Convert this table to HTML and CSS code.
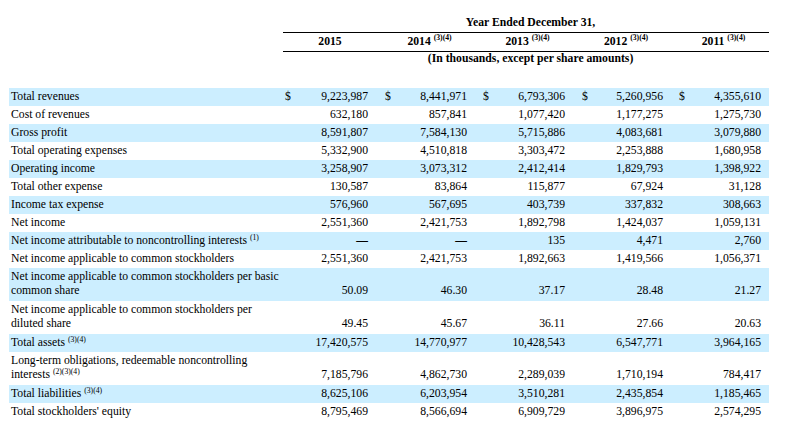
FILE: index.html
```html
<!DOCTYPE html>
<html>
<head>
<meta charset="utf-8">
<link rel="stylesheet" href="styles.css">
</head>
<body>
<div class="page">
<table class="fin">
  <colgroup>
    <col class="c-label">
    <col class="c-dollar"><col class="c-n72"><col class="c-g15">
    <col class="c-dollar"><col class="c-n71"><col class="c-g14">
    <col class="c-dollar"><col class="c-n71"><col class="c-g15">
    <col class="c-dollar"><col class="c-n70"><col class="c-g14">
    <col class="c-dollar"><col class="c-n71"><col class="c-g8">
  </colgroup>
  <thead>
    <tr class="h1">
      <th></th>
      <th colspan="15" class="hc">Year Ended December 31,</th>
    </tr>
    <tr class="h2">
      <th class="nb"></th>
      <th colspan="2" class="yr">2015</th><th></th>
      <th colspan="2" class="yr">2014 <span class="sup">(3)(4)</span></th><th></th>
      <th colspan="2" class="yr">2013 <span class="sup">(3)(4)</span></th><th></th>
      <th colspan="2" class="yr">2012 <span class="sup">(3)(4)</span></th><th></th>
      <th colspan="2" class="yr">2011 <span class="sup">(3)(4)</span></th><th></th>
    </tr>
    <tr class="h3">
      <th></th>
      <th colspan="15" class="hc">(In thousands, except per share amounts)</th>
    </tr>
    <tr class="spacer"><td colspan="16"></td></tr>
  </thead>
  <tbody>
    <tr class="alt">
      <td class="lbl">Total revenues</td>
      <td class="d">$</td><td class="n">9,223,987</td><td></td>
      <td class="d">$</td><td class="n">8,441,971</td><td></td>
      <td class="d">$</td><td class="n">6,793,306</td><td></td>
      <td class="d">$</td><td class="n">5,260,956</td><td></td>
      <td class="d">$</td><td class="n">4,355,610</td><td></td>
    </tr>
    <tr>
      <td class="lbl">Cost of revenues</td>
      <td></td><td class="n">632,180</td><td></td>
      <td></td><td class="n">857,841</td><td></td>
      <td></td><td class="n">1,077,420</td><td></td>
      <td></td><td class="n">1,177,275</td><td></td>
      <td></td><td class="n">1,275,730</td><td></td>
    </tr>
    <tr class="alt">
      <td class="lbl">Gross profit</td>
      <td></td><td class="n">8,591,807</td><td></td>
      <td></td><td class="n">7,584,130</td><td></td>
      <td></td><td class="n">5,715,886</td><td></td>
      <td></td><td class="n">4,083,681</td><td></td>
      <td></td><td class="n">3,079,880</td><td></td>
    </tr>
    <tr>
      <td class="lbl">Total operating expenses</td>
      <td></td><td class="n">5,332,900</td><td></td>
      <td></td><td class="n">4,510,818</td><td></td>
      <td></td><td class="n">3,303,472</td><td></td>
      <td></td><td class="n">2,253,888</td><td></td>
      <td></td><td class="n">1,680,958</td><td></td>
    </tr>
    <tr class="alt">
      <td class="lbl">Operating income</td>
      <td></td><td class="n">3,258,907</td><td></td>
      <td></td><td class="n">3,073,312</td><td></td>
      <td></td><td class="n">2,412,414</td><td></td>
      <td></td><td class="n">1,829,793</td><td></td>
      <td></td><td class="n">1,398,922</td><td></td>
    </tr>
    <tr>
      <td class="lbl">Total other expense</td>
      <td></td><td class="n">130,587</td><td></td>
      <td></td><td class="n">83,864</td><td></td>
      <td></td><td class="n">115,877</td><td></td>
      <td></td><td class="n">67,924</td><td></td>
      <td></td><td class="n">31,128</td><td></td>
    </tr>
    <tr class="alt">
      <td class="lbl">Income tax expense</td>
      <td></td><td class="n">576,960</td><td></td>
      <td></td><td class="n">567,695</td><td></td>
      <td></td><td class="n">403,739</td><td></td>
      <td></td><td class="n">337,832</td><td></td>
      <td></td><td class="n">308,663</td><td></td>
    </tr>
    <tr>
      <td class="lbl">Net income</td>
      <td></td><td class="n">2,551,360</td><td></td>
      <td></td><td class="n">2,421,753</td><td></td>
      <td></td><td class="n">1,892,798</td><td></td>
      <td></td><td class="n">1,424,037</td><td></td>
      <td></td><td class="n">1,059,131</td><td></td>
    </tr>
    <tr class="alt">
      <td class="lbl">Net income attributable to noncontrolling interests <span class="sup l">(1)</span></td>
      <td></td><td class="n dash">—</td><td></td>
      <td></td><td class="n dash">—</td><td></td>
      <td></td><td class="n">135</td><td></td>
      <td></td><td class="n">4,471</td><td></td>
      <td></td><td class="n">2,760</td><td></td>
    </tr>
    <tr>
      <td class="lbl">Net income applicable to common stockholders</td>
      <td></td><td class="n">2,551,360</td><td></td>
      <td></td><td class="n">2,421,753</td><td></td>
      <td></td><td class="n">1,892,663</td><td></td>
      <td></td><td class="n">1,419,566</td><td></td>
      <td></td><td class="n">1,056,371</td><td></td>
    </tr>
    <tr class="alt dbl">
      <td class="lbl">Net income applicable to common stockholders per basic<br>common share</td>
      <td></td><td class="n">50.09</td><td></td>
      <td></td><td class="n">46.30</td><td></td>
      <td></td><td class="n">37.17</td><td></td>
      <td></td><td class="n">28.48</td><td></td>
      <td></td><td class="n">21.27</td><td></td>
    </tr>
    <tr class="dbl">
      <td class="lbl">Net income applicable to common stockholders per<br>diluted share</td>
      <td></td><td class="n">49.45</td><td></td>
      <td></td><td class="n">45.67</td><td></td>
      <td></td><td class="n">36.11</td><td></td>
      <td></td><td class="n">27.66</td><td></td>
      <td></td><td class="n">20.63</td><td></td>
    </tr>
    <tr class="alt">
      <td class="lbl">Total assets <span class="sup l">(3)(4)</span></td>
      <td></td><td class="n">17,420,575</td><td></td>
      <td></td><td class="n">14,770,977</td><td></td>
      <td></td><td class="n">10,428,543</td><td></td>
      <td></td><td class="n">6,547,771</td><td></td>
      <td></td><td class="n">3,964,165</td><td></td>
    </tr>
    <tr class="dbl">
      <td class="lbl">Long-term obligations, redeemable noncontrolling<br>interests <span class="sup l">(2)(3)(4)</span></td>
      <td></td><td class="n">7,185,796</td><td></td>
      <td></td><td class="n">4,862,730</td><td></td>
      <td></td><td class="n">2,289,039</td><td></td>
      <td></td><td class="n">1,710,194</td><td></td>
      <td></td><td class="n">784,417</td><td></td>
    </tr>
    <tr class="alt">
      <td class="lbl">Total liabilities <span class="sup l">(3)(4)</span></td>
      <td></td><td class="n">8,625,106</td><td></td>
      <td></td><td class="n">6,203,954</td><td></td>
      <td></td><td class="n">3,510,281</td><td></td>
      <td></td><td class="n">2,435,854</td><td></td>
      <td></td><td class="n">1,185,465</td><td></td>
    </tr>
    <tr>
      <td class="lbl">Total stockholders' equity</td>
      <td></td><td class="n">8,795,469</td><td></td>
      <td></td><td class="n">8,566,694</td><td></td>
      <td></td><td class="n">6,909,729</td><td></td>
      <td></td><td class="n">3,896,975</td><td></td>
      <td></td><td class="n">2,574,295</td><td></td>
    </tr>
  </tbody>
</table>
</div>
</body>
</html>
```

FILE: styles.css
```css
html, body {
  margin: 0;
  padding: 0;
  background: #ffffff;
}

.page {
  padding: 16px 0 0 9px;
  font-family: "Liberation Serif", "Times New Roman", serif;
  font-size: 11.7px;
  color: #000000;
}

.fin {
  width: 760px;
  table-layout: fixed;
  border-collapse: separate;
  border-spacing: 0;
}

.c-label { width: 274px; }
.c-dollar { width: 13px; }
.c-n72 { width: 72px; }
.c-n71 { width: 71px; }
.c-n70 { width: 70px; }
.c-g15 { width: 15px; }
.c-g14 { width: 14px; }
.c-g8 { width: 8px; }

.fin th,
.fin td {
  padding: 0;
  line-height: 14px;
  white-space: nowrap;
}

.fin th {
  font-weight: bold;
}

.h1 th {
  padding: 0 0 2px;
  vertical-align: bottom;
}

.hc {
  text-align: center;
  padding-left: 9px !important;
}

.h2 th {
  border-top: 1px solid #000000;
  border-bottom: 1px solid #000000;
  padding: 2px 0;
}

.h2 th.nb {
  border: none;
}

.h2 .yr {
  text-align: center;
  padding-left: 9px;
}

.spacer td {
  height: 22px;
}

.fin tbody td {
  padding: 2px 0 2px;
  vertical-align: bottom;
}

.fin tbody tr.dbl td {
  padding-bottom: 3px;
}

.fin tbody td.lbl {
  padding-left: 2px;
  vertical-align: top;
}

.fin tbody td.d {
  padding-left: 2px;
}

.fin tbody td.n {
  text-align: right;
}

.fin tbody td.dash {
  font-weight: bold;
}

.alt {
  background: #cceeff;
}

.sup {
  font-size: 7.7px;
  line-height: 0;
  vertical-align: 5px;
}

.sup.l {
  vertical-align: 4px;
}
```
